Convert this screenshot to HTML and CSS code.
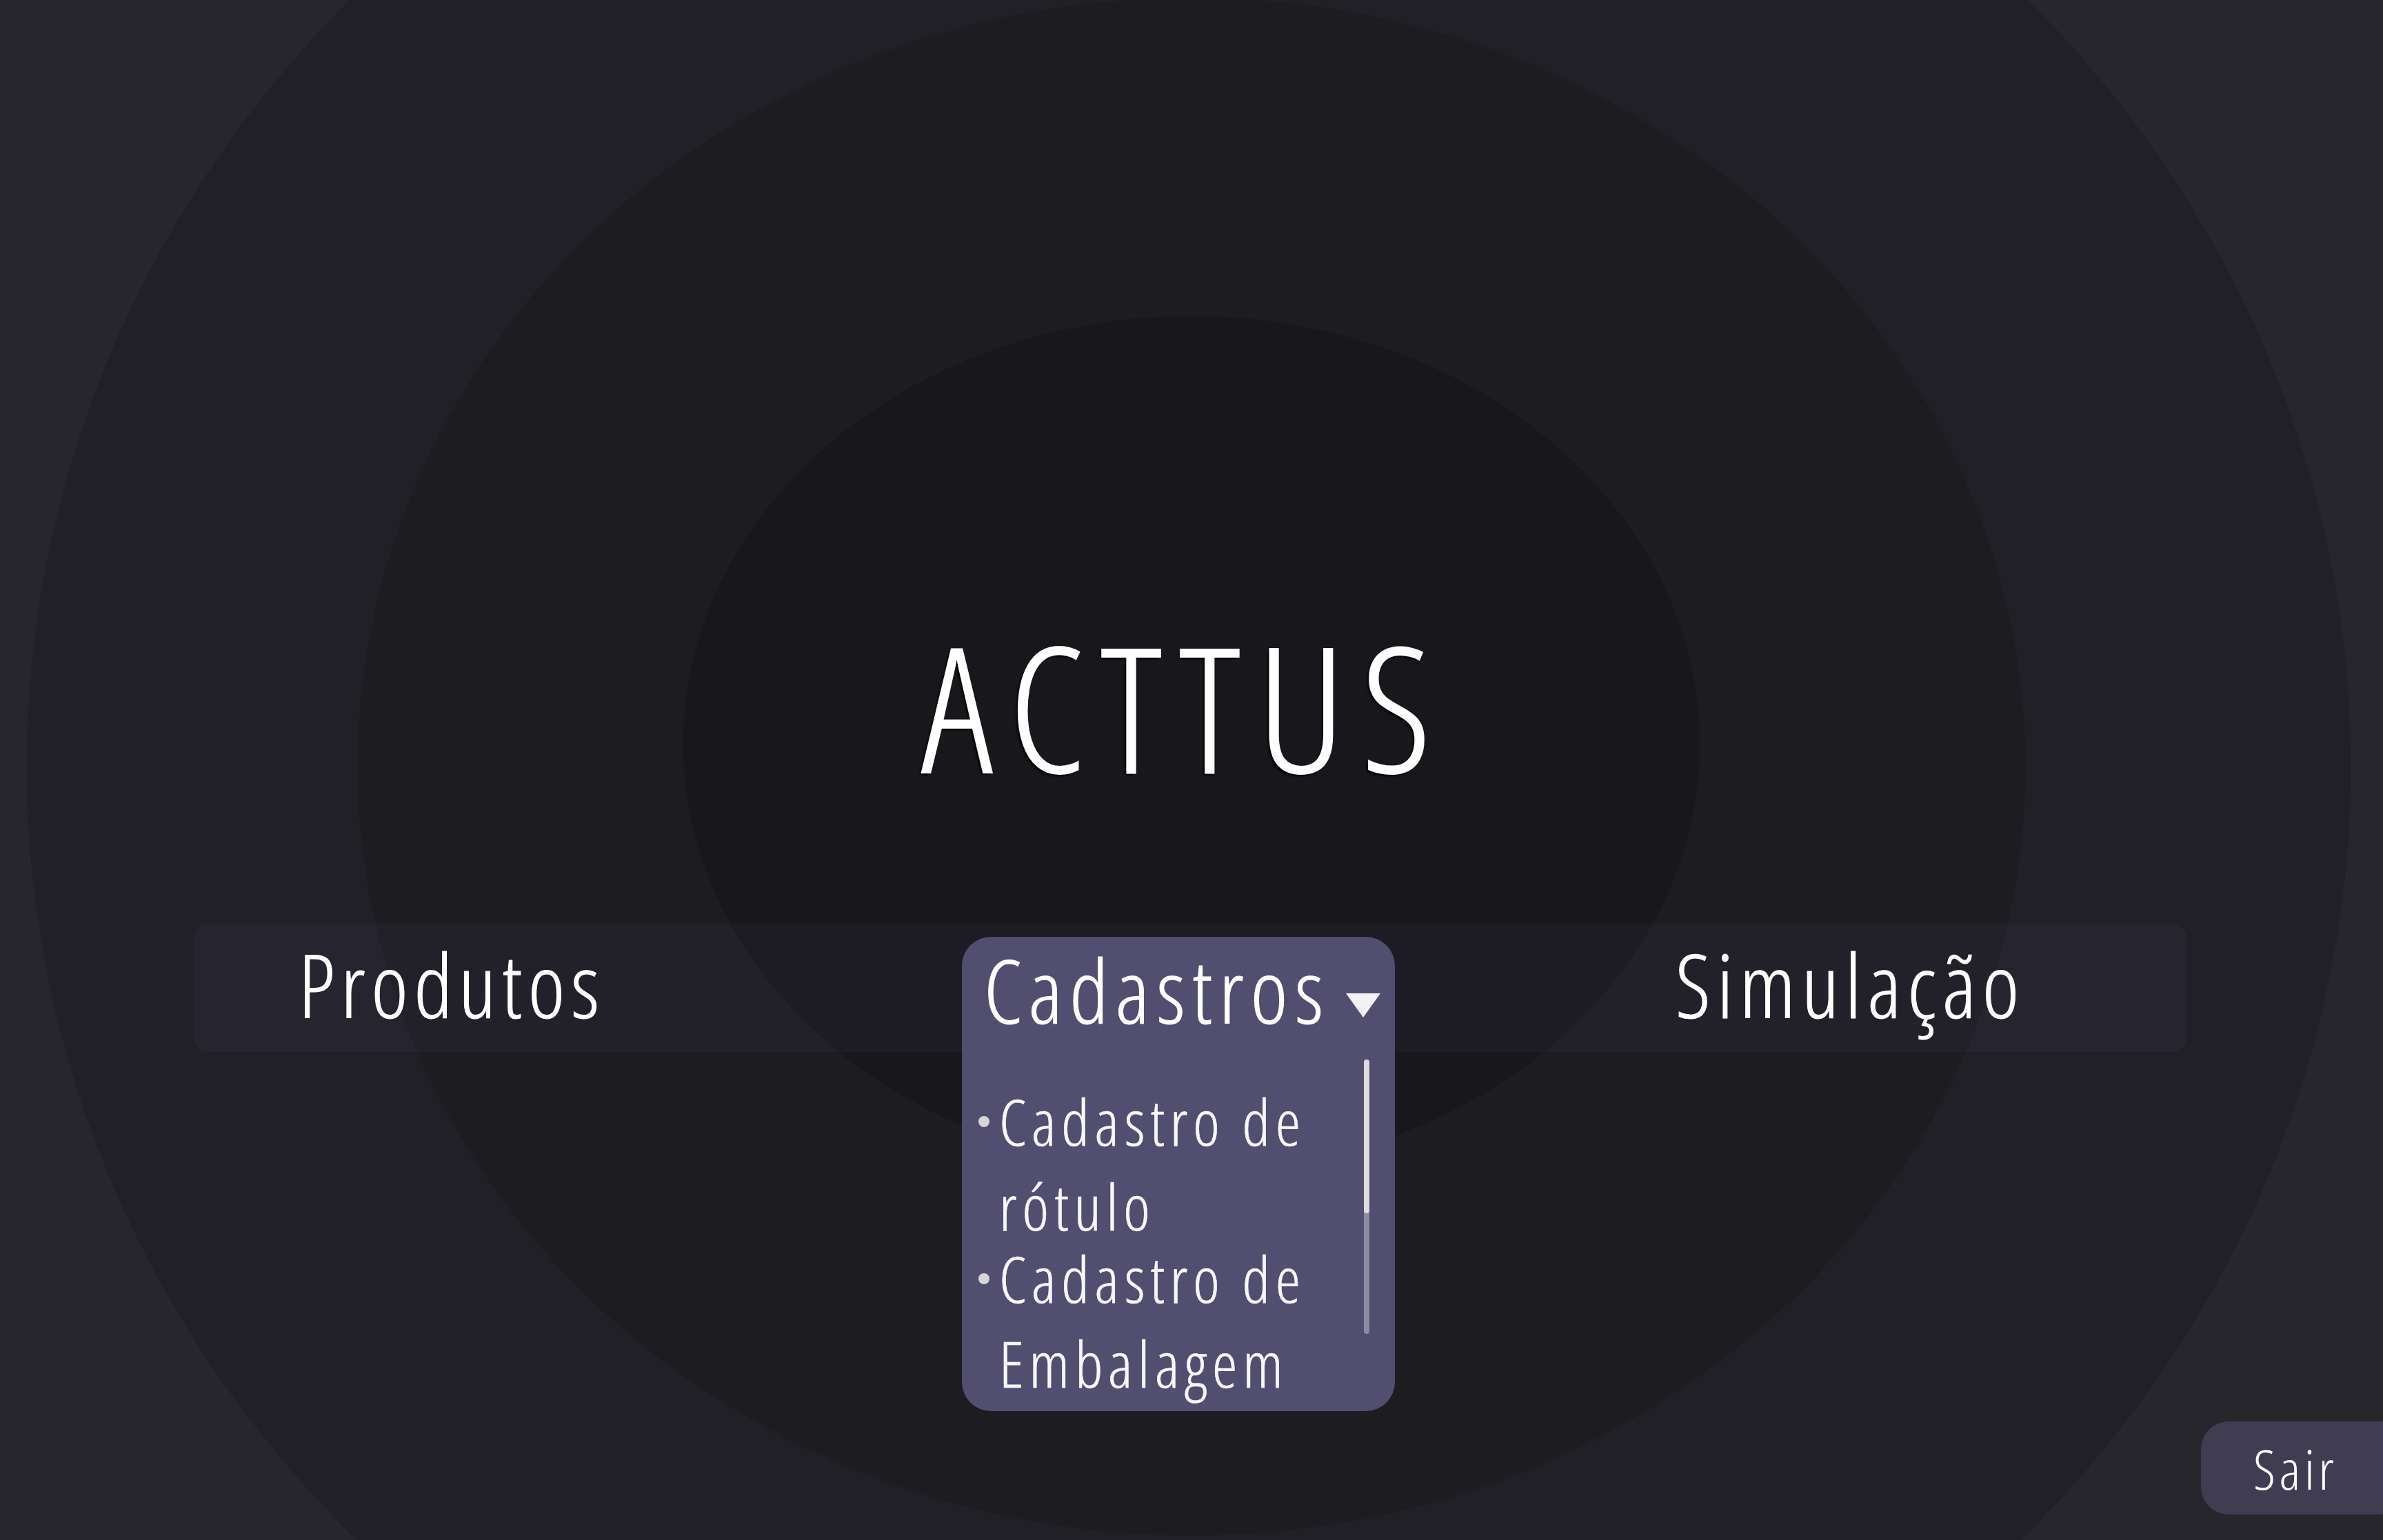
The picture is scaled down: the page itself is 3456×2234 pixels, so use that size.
FILE: index.html
```html
<!DOCTYPE html>
<html lang="pt-BR">
<head>
<meta charset="utf-8">
<title>ACTTUS</title>
<link rel="stylesheet" href="styles.css">
</head>
<body>
<div class="page">
  <h1 class="title">ACTTUS</h1>
  <nav class="nav">
    <div class="nav-cell nav-left"><span class="nav-item nav-prod">Produtos</span></div>
    <div class="dropdown">
      <div class="dd-head">
        <span class="dd-label">Cadastros</span>
        <svg class="dd-caret" width="50" height="35" viewBox="0 0 50 35"><polygon points="0,0 50,0 25,35" fill="#f2f2f2"/></svg>
      </div>
      <div class="dd-body">
        <ul class="dd-list">
          <li class="dd-item">Cadastro de rótulo</li>
          <li class="dd-item">Cadastro de Embalagem</li>
        </ul>
        <div class="scrollbar"><div class="thumb"></div></div>
      </div>
    </div>
    <div class="nav-cell nav-right"><span class="nav-item">Simulação</span></div>
  </nav>
  <footer class="footer">
    <button class="exit">Sair</button>
  </footer>
</div>
</body>
</html>
```
FILE: styles.css
```css
html, body {
  margin: 0;
  padding: 0;
}
body {
  overflow: hidden;
  font-family: "Open Sans", "Noto Sans", sans-serif;
  font-weight: 300;
  font-stretch: 75%;
  color: #ffffff;
}
.page {
  width: 100vw;
  height: 100vh;
  display: flex;
  flex-direction: column;
  background:
    radial-gradient(738px 621px at 1728px 1079px, #18171c 99.85%, rgba(24,23,28,0) 100%),
    radial-gradient(1210px 1116px at 1728px 1112px, #1d1c21 99.9%, rgba(29,28,33,0) 100%),
    radial-gradient(1686px 1608px at 1724px 1112px, #212027 99.93%, rgba(33,32,39,0) 100%),
    #27262c;
}
.title {
  margin: 898px 0 0;
  padding-right: 19px;
  font-size: 252px;
  line-height: 252px;
  font-weight: 300;
  letter-spacing: 0.099em;
  text-align: center;
  -webkit-text-stroke: 2px #ffffff;
  text-shadow: -3px 3px 3px rgba(0, 0, 0, 0.85);
}
.nav {
  margin: 190px 285px 0 281px;
  height: 186px;
  border-radius: 20px;
  background: rgba(83, 82, 119, 0.1);
  display: grid;
  grid-template-columns: 1114px 628px 1fr;
  align-items: start;
}
.nav-cell {
  padding-top: 24px;
}
.nav-left {
  padding-left: 152px;
}
.nav-right {
  padding-left: 407px;
}
.nav-item {
  font-size: 127px;
  line-height: 127px;
  letter-spacing: 0.072em;
  white-space: nowrap;
  -webkit-text-stroke: 1px #ffffff;
}
.nav-prod {
  letter-spacing: 0.07em;
}
.dropdown {
  margin-top: 19px;
  height: 688px;
  border-radius: 42px;
  background: rgba(85, 82, 117, 0.94);
  display: flex;
  flex-direction: column;
}
.dd-head {
  display: flex;
  align-items: flex-start;
  padding: 13px 0 0 32px;
}
.dd-label {
  font-size: 128px;
  line-height: 128px;
  letter-spacing: 0.08em;
  -webkit-text-stroke: 1px #ffffff;
}
.dd-caret {
  margin: 69px 0 0 23px;
}
.dd-body {
  display: flex;
  align-items: flex-start;
  padding-top: 37px;
}
.dd-list {
  flex: 1;
  margin: 28px 0 0;
  padding: 0 0 0 24px;
  list-style: none;
}
.dd-item {
  display: flex;
  align-items: flex-start;
  height: 228px;
  font-size: 92px;
  line-height: 123px;
  letter-spacing: 0.085em;
  color: #f7f7f9;
  -webkit-text-stroke: 0.6px #f7f7f9;
}
.dd-item::before {
  content: "";
  flex: none;
  width: 16px;
  height: 16px;
  margin: 54px 14px 0 0;
  border-radius: 50%;
  background: #d6d6da;
}
.scrollbar {
  flex: none;
  width: 8px;
  height: 398px;
  margin-right: 37px;
  border-radius: 4px;
  background: #8d8aa4;
  display: flex;
  flex-direction: column;
}
.thumb {
  height: 223px;
  border-radius: 4px;
  background: #dcdce1;
}
.footer {
  margin-top: auto;
  margin-bottom: 37px;
  display: flex;
  justify-content: flex-end;
}
.exit {
  width: 300px;
  height: 135px;
  margin-right: -36px;
  padding: 0 0 0 76px;
  border: 0;
  border-radius: 40px;
  background: #403d52;
  color: #ffffff;
  font-family: inherit;
  font-weight: 300;
  font-stretch: 75%;
  font-size: 80px;
  line-height: 128px;
  letter-spacing: 0.07em;
  text-align: left;
}
```
